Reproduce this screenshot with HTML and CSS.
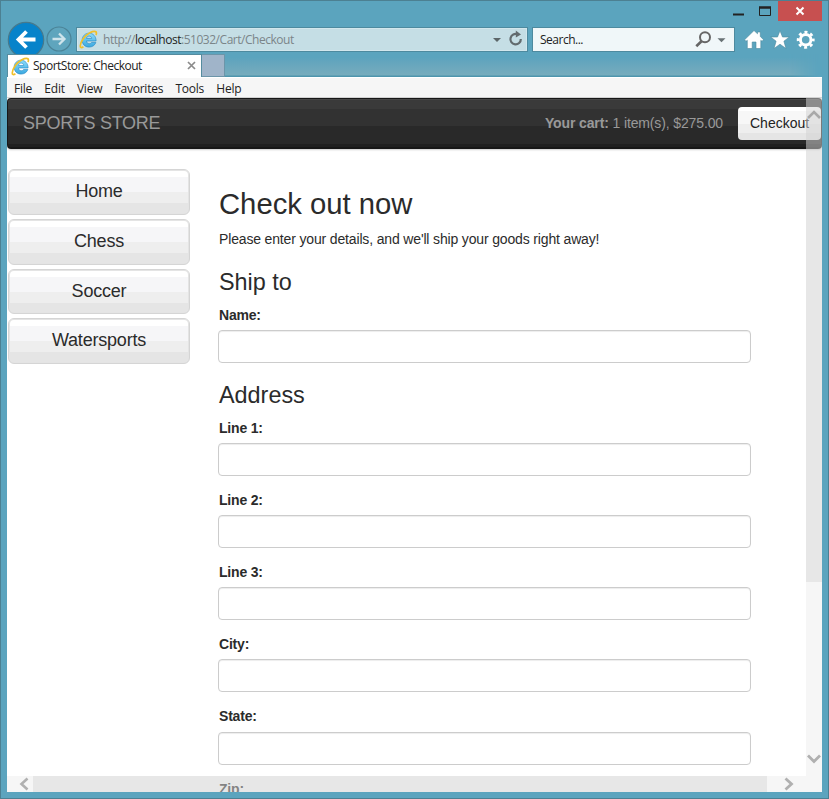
FILE: index.html
```html
<!DOCTYPE html>
<html lang="en">
<head>
<meta charset="utf-8">
<title>SportStore: Checkout</title>
<link rel="stylesheet" href="styles.css">
</head>
<body>
<svg class="defs" width="0" height="0">
  <defs>
    <linearGradient id="blue" x1="0" y1="0" x2="0" y2="1"><stop offset="0" stop-color="#8bdcfa"/><stop offset="1" stop-color="#3aa8e0"/></linearGradient>
    <symbol id="ie" viewBox="0 0 18 18">
      <path d="M16 11.8C15 14.6 12.4 16.2 9.5 16.2C5.7 16.2 3 13.4 3 9.6S5.8 3 9.5 3S16.2 5.9 16.2 10.4H7.1C7.2 12.1 8.2 13 9.7 13C10.8 13 11.5 12.6 11.9 11.8ZM7.1 8H12C11.8 6.5 11 5.8 9.6 5.8S7.3 6.6 7.1 8Z" fill="url(#blue)" stroke="#2489c5" stroke-width=".6" fill-rule="evenodd"/>
      <path d="M4.2 15.9C2.3 17.1 1 16.8 1.2 14.9C1.5 11.3 5.3 5.2 10.3 2.6C13.5 1 16.4.8 16.5 2.8C16.5 3.6 16.4 4.2 16.1 4.9" fill="none" stroke="#f0c02a" stroke-width="1.6"/>
    </symbol>
  </defs>
</svg>
<div class="window">
  <div class="controls">
    <svg width="42" height="20" viewBox="0 0 42 20"><path d="M1 14.5H12" stroke="#222" stroke-width="2"/><path d="M27.5 7V15.5H38.5V7" fill="none" stroke="#222"/><path d="M27 7.5H39" stroke="#222" stroke-width="2.5"/></svg>
    <div class="close"><svg width="10" height="10" viewBox="0 0 10 10"><path d="M1.5 1.5L8.5 8.5M8.5 1.5L1.5 8.5" stroke="#fff" stroke-width="2"/></svg></div>
  </div>
  <div class="toolbar">
    <svg class="back" width="38" height="38" viewBox="0 0 38 38"><circle cx="19" cy="19" r="17.7" fill="#0783ca" stroke="#47798c" stroke-width="1.2"/><path d="M28.5 18.5H12M19.5 10.5L11.5 18.5L19.5 26.5" fill="none" stroke="#fff" stroke-width="3.8"/></svg>
    <svg class="forward" width="26" height="26" viewBox="0 0 26 26"><circle cx="13" cy="13" r="12" fill="#5fa5bd" stroke="#4b8397" stroke-width="1.2"/><path d="M6.5 13H18M13 7.5L18.5 13L13 18.5" fill="none" stroke="#cfe4eb" stroke-width="2.3"/></svg>
    <div class="address">
      <svg width="19" height="19"><use href="#ie"/></svg>
      <span class="url">http://<b>localhost</b>:51032/Cart/Checkout</span>
      <svg class="addr-tools" width="34" height="20" viewBox="0 0 34 20"><path d="M3 9H11L7 13Z" fill="#5c6669"/><path d="M27.6 5.4A5.2 5.2 0 1 0 30.8 10" fill="none" stroke="#626b6e" stroke-width="2.2"/><path d="M25.8 1.6L31 5.4L25.8 8.4Z" fill="#626b6e"/></svg>
    </div>
    <div class="search"><span>Search...</span>
      <svg width="32" height="20" viewBox="0 0 32 20"><circle cx="10" cy="8.3" r="5" fill="none" stroke="#666" stroke-width="2"/><path d="M6.5 12.2L1.3 17.2" stroke="#666" stroke-width="2.6"/><path d="M22.5 9.3H30.5L26.5 13.3Z" fill="#687275"/></svg>
    </div>
    <svg class="actions" width="72" height="22" viewBox="0 0 72 22" fill="#fff">
      <path d="M10 1.5L13.5 4.8V3H16.3V7.5L19.5 10.7L18 12.3L16.8 11.3V19.5H12V13H8.2V19.5H3.3V11.3L2 12.3L.6 10.8Z" stroke="#4c899d" stroke-width=".6"/>
      <path d="M36 1.7L38.5 8H45.3L39.9 12.2L42 19.5L36 15.2L30 19.5L32.1 12.2L26.7 8H33.5Z" stroke="#4c899d" stroke-width=".6"/>
      <g transform="translate(61.7 10.8)"><circle r="5.3" fill="none" stroke="#fff" stroke-width="3"/><circle r="7.6" fill="none" stroke="#fff" stroke-width="2.7" stroke-dasharray="2.985" stroke-dashoffset="1.49"/></g>
    </svg>
  </div>
  <div class="tabs">
    <div class="tab"><svg width="19" height="19"><use href="#ie"/></svg><span>SportStore: Checkout</span><svg class="tab-close" width="9" height="9" viewBox="0 0 9 9"><path d="M1 1L8 8M8 1L1 8" stroke="#8b8b8b" stroke-width="1.7"/></svg></div>
    <div class="new-tab"></div>
    <div class="tab-glow"></div>
  </div>
  <div class="menu"><span>File</span><span>Edit</span><span>View</span><span>Favorites</span><span>Tools</span><span>Help</span></div>
  <main class="page">
    <header class="navbar">
      <span class="brand">SPORTS STORE</span>
      <span class="cart"><b>Your cart:</b> 1 item(s), $275.00</span>
      <a class="checkout">Checkout</a>
    </header>
    <div class="columns">
      <nav class="categories"><a>Home</a><a>Chess</a><a>Soccer</a><a>Watersports</a></nav>
      <form class="form">
        <h2>Check out now</h2>
        <p>Please enter your details, and we'll ship your goods right away!</p>
        <h3>Ship to</h3>
        <div class="group"><label>Name:</label><div class="input"></div></div>
        <h3 class="second">Address</h3>
        <div class="group"><label>Line 1:</label><div class="input"></div></div>
        <div class="group"><label>Line 2:</label><div class="input"></div></div>
        <div class="group"><label>Line 3:</label><div class="input"></div></div>
        <div class="group"><label>City:</label><div class="input"></div></div>
        <div class="group"><label>State:</label><div class="input"></div></div>
        <div class="group"><label>Zip:</label></div>
      </form>
    </div>
    <div class="vscroll"><div class="vthumb"></div>
      <svg class="up" width="14" height="10" viewBox="0 0 14 10"><path d="M1 8L7 2L13 8" fill="none" stroke="#a9a9a9" stroke-width="2.6"/></svg>
      <svg class="down" width="14" height="10" viewBox="0 0 14 10"><path d="M1 1.5L7 7.5L13 1.5" fill="none" stroke="#b0b0b0" stroke-width="2.8"/></svg>
    </div>
    <div class="hscroll"><svg class="left" width="10" height="14" viewBox="0 0 10 14"><path d="M8.5 1.5L2.5 7L8.5 12.5" fill="none" stroke="#b0b0b0" stroke-width="2.6"/></svg><div class="hthumb"></div><svg class="right" width="10" height="14" viewBox="0 0 10 14"><path d="M1.5 1.5L7.5 7L1.5 12.5" fill="none" stroke="#b0b0b0" stroke-width="2.8"/></svg></div>
  </main>
</div>
</body>
</html>
```
FILE: styles.css
```css
* { box-sizing: border-box; }
body { margin: 0; overflow: hidden; }
.defs { position: absolute; }
svg { display: block; flex: none; }
.window {
  width: 829px; height: 799px; padding: 0 6px 6px;
  border: 1px solid #4c8092; background: #5ba4be;
  display: flex; flex-direction: column;
  font: 12px "Open Sans", sans-serif; color: #222;
}
.controls { height: 20px; display: flex; justify-content: flex-end; flex: none; }
.close { width: 44px; height: 20px; margin: 0 0 0 4px; background: #c75050; display: flex; align-items: center; justify-content: center; }
.close svg { margin-top: -1px; }
.controls > svg { margin-top: -1px; }
.toolbar { height: 33px; display: flex; align-items: flex-start; flex: none; }
.forward { margin: 5px 0 0 1px; }
.address { margin: 6px 0 0 4px; width: 452px; height: 25px; border: 1px solid #4d8a9f; background: #c5dee5; display: flex; align-items: center; padding: 0 3px 1px 2px; box-shadow: inset 0 0 0 1px #d2e7ed; }
.url { margin-left: 5px; color: #7b8589; white-space: nowrap; letter-spacing: -.47px; }
.url b { color: #222; font-weight: 400; }
.addr-tools { margin-left: auto; }
.search { margin: 6px 0 0 4px; width: 203px; height: 25px; border: 1px solid #4d8a9f; background: #f0f7f9; display: flex; align-items: center; justify-content: space-between; padding: 0 7px 1px; letter-spacing: -.6px; }
.search span { letter-spacing: -.5px; }
.actions { margin: 8px 0 0 9px; }
.tabs { height: 23px; display: flex; position: relative; flex: none; }
.tab { width: 195px; height: 23px; border: 1px solid #558c9f; border-bottom: 0; background: #fff; display: flex; align-items: center; padding-left: 3px; letter-spacing: -.5px; white-space: nowrap; }
.tab span { margin: -1px 0 0 3px; }
.tab-close { margin: -2px 5px 0 auto; }
.new-tab { width: 23px; height: 23px; background: #a0b4c9; border: 1px solid #6c95a9; border-left: 0; }
.tab-glow { width: 594px; height: 23px; background: linear-gradient(#5ba4be 15%, #64a5bd 35%, #76acbd 90%, #4e95ad 97%); mask-image: linear-gradient(to right, #000 95%, transparent); }
.menu { height: 21px; background: #f6f6f6; border-top: 1px solid #fff; border-bottom: 1px solid #d2d2d2; display: flex; align-items: center; padding-left: 7px; flex: none; letter-spacing: -.22px; }
.menu span { margin: 1px 12.2px 0 0; }
.page { flex: 1; min-height: 0; background: #fff; position: relative; overflow: hidden; font: 14px/19.5px "Liberation Sans", Arial, sans-serif; letter-spacing: -.155px; color: #2b2b2b; }
.navbar { height: 51px; border: 1px solid #171717; border-bottom-width: 2px; border-radius: 4px; background: linear-gradient(#3a3a3a 0 10px, #323232 10px 27px, #292929 27px 45px, #202020 45px); box-shadow: 0 1px 2px #0003, inset 0 1px #484848; display: flex; align-items: center; padding-left: 15px; color: #999; }
.brand { font-size: 18px; letter-spacing: -.25px; margin-top: 2px; }
.cart { margin-left: auto; margin-right: 15px; margin-top: 1px; letter-spacing: -.13px; }
.checkout { width: 83px; height: 33px; border-radius: 4px; padding-left: 12px; line-height: 33px; letter-spacing: 0; color: #222; background: linear-gradient(#fff 0 4px, #f7f7f7 4px 17px, #eee 17px 26px, #e5e5e5 26px); }
.columns { display: flex; }
.categories { width: 182px; margin: 20px 0 0 1px; display: flex; flex-direction: column; gap: 4px; }
.categories a { height: 45.8px; border: 1px solid #d5d5d5; box-shadow: inset 0 0 0 1px #e4e4e4; border-radius: 6px; background: linear-gradient(#fff 0 7px, #f6f6f8 7px 22px, #eee 22px 33px, #e5e5e5 33px); text-align: center; font-size: 18px; line-height: 43px; letter-spacing: -.2px; }
.form { width: 533px; margin-left: 28px; }
h2 { margin: 39px 0 10px 1px; font-size: 29.25px; line-height: 32px; font-weight: 400; letter-spacing: 0; }
h3 { margin: 19.5px 0 10.5px 1px; font-size: 23.4px; line-height: 26px; font-weight: 400; letter-spacing: 0; }
p { margin: 0 0 0 1px; }
.group { height: 57.7px; margin-bottom: 14.5px; }
.group + .second { margin-top: 19px; }
label { display: block; height: 24.2px; font-weight: 700; margin-left: 1px; letter-spacing: -.2px; }
.input { height: 33px; border: 1px solid #ccc; border-radius: 4px; background: #fff; box-shadow: inset 0 1px 1px #00000013; }
.vscroll { position: absolute; right: 0; top: 0; width: 16px; height: 678px; background: #e6e6e65c; }
.vthumb { height: 484px; background: #c0c0c044; }
.up { position: absolute; left: 1px; top: 12px; }
.down { position: absolute; left: 1px; bottom: 12px; }
.hscroll { position: absolute; left: 0; right: 0; bottom: 0; height: 16px; background: #e6e6e65c; display: flex; align-items: center; }
.left { margin-left: 12px; }
.hthumb { width: 734px; height: 16px; margin-left: 4px; background: #c0c0c044; }
.right { margin-left: 17px; }
```
